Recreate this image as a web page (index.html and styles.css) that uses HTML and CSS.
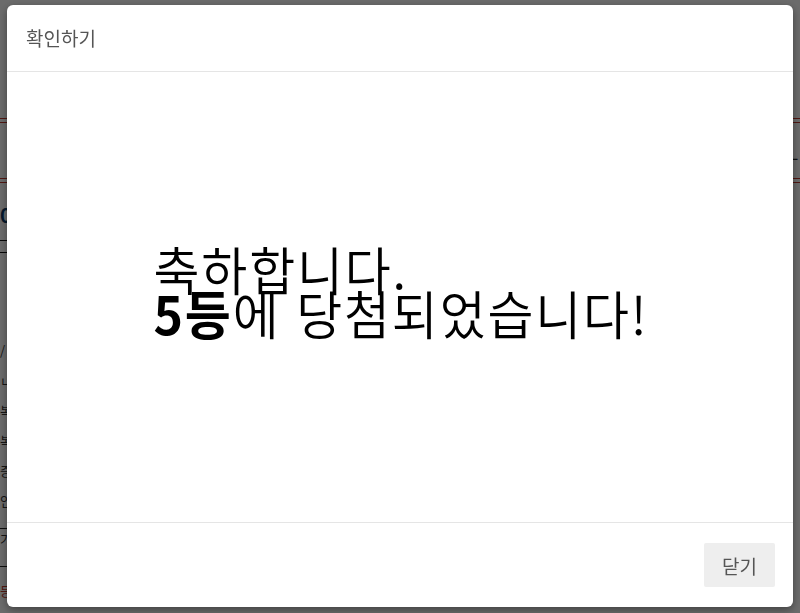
FILE: index.html
```html
<!DOCTYPE html>
<html lang="ko">
<head>
<meta charset="utf-8">
<title>확인하기</title>
<link rel="stylesheet" href="styles.css">
</head>
<body>
<div class="page">
  <div class="page-top"></div>
  <div class="redline"></div>
  <div class="page-row"><span class="side-r">L</span></div>
  <div class="redline"></div>
  <div class="page-title">0</div>
  <div class="thin-line"></div>
  <div class="thin-line gap"></div>
  <ul class="page-list">
    <li>/ 상세보기</li>
    <li>ㄴ 안내</li>
    <li>복권 안내</li>
    <li>복권 안내</li>
    <li>증 안내</li>
    <li class="u">인 안내</li>
    <li class="u">기 안내</li>
    <li class="red">등 안내</li>
  </ul>
</div>

<div class="backdrop">
  <div class="modal">
    <div class="modal-header">
      <h4 class="modal-title">확인하기</h4>
    </div>
    <div class="modal-body">
      <div class="prize">
        <div class="prize-line">축하합니다.</div>
        <div class="prize-line"><b>5등</b>에 당첨되었습니다!</div>
      </div>
    </div>
    <div class="modal-footer">
      <button class="btn" type="button">닫기</button>
    </div>
  </div>
</div>
</body>
</html>
```

FILE: styles.css
```css
* { box-sizing: border-box; }

html, body {
  margin: 0;
  padding: 0;
  height: 100%;
}

body {
  font-family: "Noto Sans CJK KR", "Noto Sans", sans-serif;
  background: #ffffff;
  color: #333;
  overflow: hidden;
}

/* background page (mostly hidden by the dialog) */
.page-top { height: 118px; }
.redline {
  height: 5px;
  border-top: 1px solid #c0392b;
  border-bottom: 1px solid #c0392b;
}
.page-row {
  height: 55px;
  position: relative;
}
.side-r {
  position: absolute;
  right: 2px;
  top: 18px;
  font-size: 16px;
  color: #222;
}
.page-title {
  height: 57px;
  padding-top: 22px;
  font-size: 20px;
  color: #0a3a6a;
  font-weight: bold;
  line-height: 20px;
}
.thin-line {
  height: 1px;
  background: #111;
  width: 40px;
}
.thin-line.gap { margin-top: 11px; }
.page-list {
  list-style: none;
  margin: 88px 0 0;
  padding: 0;
  font-size: 13px;
  color: #333;
}
.page-list li {
  height: 30px;
  line-height: 20px;
  white-space: nowrap;
}
.page-list li.u {
  height: 38px;
  border-bottom: 1px solid #222;
  width: 100px;
}
.page-list li.red { color: #c0392b; margin-top: 14px; }

/* overlay */
.backdrop {
  position: fixed;
  inset: 0;
  background: rgba(0, 0, 0, 0.58);
  padding: 5px 7px 6px 7px;
  display: flex;
}

.modal {
  flex: 1;
  background: #fff;
  border-radius: 6px;
  display: flex;
  flex-direction: column;
  overflow: hidden;
  box-shadow: 0 3px 9px rgba(0, 0, 0, 0.4);
}

.modal-header {
  height: 67px;
  border-bottom: 1px solid #e5e5e5;
  padding: 19px 19px 0;
  flex: none;
}
.modal-title {
  margin: 0;
  font-size: 19px;
  font-weight: normal;
  line-height: 28px;
  color: #555;
}

.modal-body {
  flex: 1;
  display: flex;
  align-items: center;
  justify-content: center;
  padding-bottom: 14px;
}

.prize {
  color: #000;
  font-size: 50px;
  font-weight: 350;
  letter-spacing: 1.8px;
  margin-left: 2px;
  transform: scaleY(1.05);
}
.prize-line {
  line-height: 42px;
  height: 42px;
  white-space: nowrap;
}
.prize-line b { font-weight: 700; }

.modal-footer {
  height: 85px;
  flex: none;
  border-top: 1px solid #e5e5e5;
  display: flex;
  justify-content: flex-end;
  align-items: flex-start;
  padding: 20px 18px 0 0;
}

.btn {
  width: 71px;
  height: 44px;
  background: #eeeeee;
  border: none;
  border-radius: 2px;
  font-family: "Noto Sans CJK KR", "Noto Sans", sans-serif;
  font-size: 19px;
  color: #555;
  padding: 0;
}
```
